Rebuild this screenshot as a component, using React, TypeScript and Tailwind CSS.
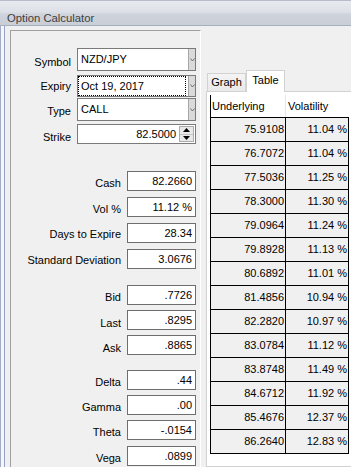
import React from "react";

interface Field {
  label: string;
  value: string;
  mt: string;
  pt: string;
}

const fields: Field[] = [
  { label: "Cash", value: "82.2660", mt: "mt-[27px]", pt: "pt-[6px]" },
  { label: "Vol %", value: "11.12 %", mt: "mt-[6px]", pt: "pt-[6px]" },
  { label: "Days to Expire", value: "28.34", mt: "mt-[6px]", pt: "pt-[5px]" },
  { label: "Standard Deviation", value: "3.0676", mt: "mt-[6px]", pt: "pt-[5px]" },
  { label: "Bid", value: ".7726", mt: "mt-[16px]", pt: "pt-[6px]" },
  { label: "Last", value: ".8295", mt: "mt-[5px]", pt: "pt-[7px]" },
  { label: "Ask", value: ".8865", mt: "mt-[5px]", pt: "pt-[7px]" },
  { label: "Delta", value: ".44", mt: "mt-[15px]", pt: "pt-[6px]" },
  { label: "Gamma", value: ".00", mt: "mt-[5px]", pt: "pt-[6px]" },
  { label: "Theta", value: "-.0154", mt: "mt-[5px]", pt: "pt-[6px]" },
  { label: "Vega", value: ".0899", mt: "mt-[6px]", pt: "pt-[6px]" },
];

const rows: [string, string][] = [
  ["75.9108", "11.04 %"],
  ["76.7072", "11.04 %"],
  ["77.5036", "11.25 %"],
  ["78.3000", "11.30 %"],
  ["79.0964", "11.24 %"],
  ["79.8928", "11.13 %"],
  ["80.6892", "11.01 %"],
  ["81.4856", "10.94 %"],
  ["82.2820", "10.97 %"],
  ["83.0784", "11.12 %"],
  ["83.8748", "11.49 %"],
  ["84.6712", "11.92 %"],
  ["85.4676", "12.37 %"],
  ["86.2640", "12.83 %"],
];

function Combo({ value, focused }: { value: string; focused?: boolean }) {
  return (
    <div className="w-[119px] h-full border border-[#7a7a7a] bg-white flex">
      <div
        className={
          "w-[108px] flex items-center pl-[2px] border " +
          (focused ? "border-dotted border-black" : "border-transparent")
        }
      >
        <span className="leading-[13px]">{value}</span>
      </div>
      <div className="w-[2px]" />
      <div className="w-[7px] bg-[#dadada] border-l border-[#a6a6a6] flex items-center justify-center">
        <svg width="5" height="4" viewBox="0 0 5 4">
          <polyline points="0.5,0.5 2.5,3 4.5,0.5" fill="none" stroke="#6e6e6e" strokeWidth="1" />
        </svg>
      </div>
    </div>
  );
}

function Spinner({ value }: { value: string }) {
  return (
    <div className="w-[119px] h-full border border-[#7a7a7a] bg-white flex">
      <div className="flex-1 flex items-center justify-end pr-[3px]">
        <span className="leading-[13px]">{value}</span>
      </div>
      <div className="w-[15px] my-[1px] mr-[1px] flex flex-col border border-[#acacac] bg-[#e8e8e8]">
        <div className="flex-1 flex items-center justify-center border-b border-[#c4c4c4]">
          <svg width="7" height="4" viewBox="0 0 7 4">
            <polygon points="3.5,0 7,4 0,4" fill="#000" />
          </svg>
        </div>
        <div className="flex-1 flex items-center justify-center">
          <svg width="7" height="4" viewBox="0 0 7 4">
            <polygon points="0,0 7,0 3.5,4" fill="#000" />
          </svg>
        </div>
      </div>
    </div>
  );
}

function TopRow({ label, pt, mt, h, children }: { label: string; pt: string; mt: string; h: string; children: React.ReactNode }) {
  return (
    <div className={"flex " + mt + " " + h}>
      <div className={"w-[60px] text-right leading-[13px] " + pt}>{label}</div>
      <div className="ml-[6px] h-full">{children}</div>
    </div>
  );
}

function LeftPanel() {
  return (
    <div className="mt-[4px] w-[191px] shrink-0 border-l border-t border-[#a0a0a0] border-r border-r-white flex flex-col">
      <TopRow label="Symbol" pt="pt-[8px]" mt="mt-[17px]" h="h-[23px]">
        <Combo value="NZD/JPY" />
      </TopRow>
      <TopRow label="Expiry" pt="pt-[5px]" mt="mt-[4px]" h="h-[22px]">
        <Combo value="Oct 19, 2017" focused />
      </TopRow>
      <TopRow label="Type" pt="pt-[7px]" mt="mt-[1px]" h="h-[23px]">
        <Combo value="CALL" />
      </TopRow>
      <TopRow label="Strike" pt="pt-[7px]" mt="mt-[3px]" h="h-[20px]">
        <Spinner value="82.5000" />
      </TopRow>

      {fields.map((f) => (
        <div key={f.label} className={"flex h-[20px] " + f.mt}>
          <div className={"w-[110px] text-right leading-[13px] whitespace-nowrap " + f.pt}>{f.label}</div>
          <div className="ml-[6px] w-[69px] h-full border border-[#6e6e6e] bg-white flex items-center justify-end pr-[3px]">
            <span className="leading-[13px]">{f.value}</span>
          </div>
        </div>
      ))}
    </div>
  );
}

function RightPanel() {
  return (
    <div className="w-[170px] shrink-0 flex flex-col pt-[44px]">
      {/* Tabs */}
      <div className="relative z-10 flex items-end h-[22px] pl-px">
        <div className="w-[39px] h-[18px] mb-px border border-b-0 border-[#d2d2d2] bg-gradient-to-b from-[#f4f4f4] to-[#e9e9e9] flex items-center justify-center">
          <span className="leading-[13px]">Graph</span>
        </div>
        <div className="w-[39px] h-[22px] border border-b-0 border-[#d2d2d2] bg-white flex items-center justify-center pb-[2px]">
          <span className="leading-[13px]">Table</span>
        </div>
      </div>

      {/* Tab page */}
      <div className="-mt-px flex-1 border border-[#d2d2d2] bg-white pt-[3px] pl-[3px]">
        <div className="flex flex-col border-l border-black">
          <div className="flex h-[22px]">
            <div className="w-[74px] flex items-center pl-px">
              <span className="leading-[13px]">Underlying</span>
            </div>
            <div className="w-px bg-[#e6e6e6]" />
            <div className="flex-1 flex items-center pl-[2px]">
              <span className="leading-[13px]">Volatility</span>
            </div>
          </div>
          {rows.map(([u, v], i) => (
            <div
              key={u}
              className={
                "flex w-[138px] h-[24px] border-t border-r border-black bg-[#f0f0f0] " +
                (i === rows.length - 1 ? "border-b h-[25px]" : "")
              }
            >
              <div className="w-[74px] flex items-center justify-end pr-px">
                <span className="leading-[13px]">{u}</span>
              </div>
              <div className="flex-1 border-l border-black flex items-center justify-end pr-px">
                <span className="leading-[13px]">{v}</span>
              </div>
            </div>
          ))}
        </div>
      </div>
    </div>
  );
}

export default function App() {
  return (
    <div className="w-[351px] h-[467px] overflow-hidden bg-[#f0f0f0] font-['Liberation_Sans',Arial,sans-serif] text-[11px] text-black flex flex-col">
      {/* Title bar */}
      <div className="h-[26px] shrink-0 border-t border-[#b6bcc8] border-b border-b-[#a7aebc] bg-[linear-gradient(to_bottom,#e7eaef_0%,#dde1e7_45%,#cfd3db_55%,#c9ced7_100%)] pl-[7px] pt-[9px]">
        <span className="text-[11.3px] leading-[13px] text-[#3e3e3e]">Option Calculator</span>
      </div>

      <div className="flex flex-1 min-h-0">
        <div className="w-px shrink-0 bg-[#a3acc4]" />
        <div className="w-[3px] shrink-0 bg-[#f5f6fa]" />
        <div className="w-px shrink-0 bg-[#95a1c6]" />
        <div className="w-[5px] shrink-0" />
        <LeftPanel />
        <div className="w-[5px] shrink-0" />
        <RightPanel />
      </div>
    </div>
  );
}
